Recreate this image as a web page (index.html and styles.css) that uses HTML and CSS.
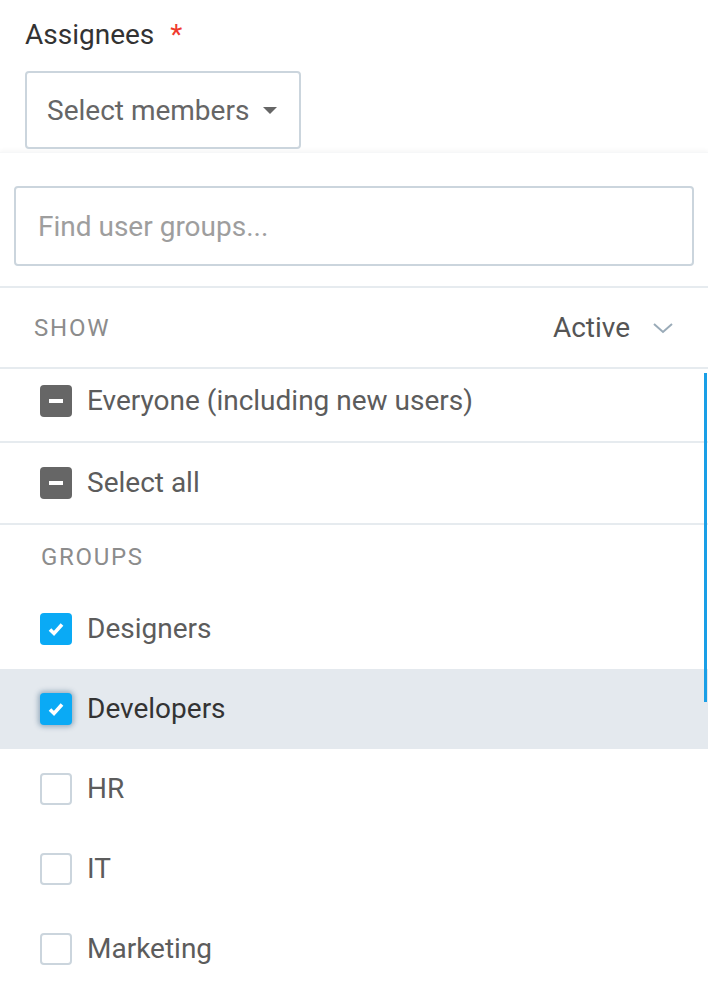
FILE: index.html
```html
<!DOCTYPE html>
<html>
<head>
<meta charset="utf-8">
<link rel="stylesheet" href="styles.css">
</head>
<body>
<div class="field">
  <div class="label">Assignees<span class="req">*</span></div>
  <div class="select">
    <span>Select members</span>
    <span class="caret"></span>
  </div>
</div>
<div class="panel">
  <div class="search-wrap">
    <input class="search" type="text" placeholder="Find user groups...">
  </div>
  <div class="show-row">
    <span class="show-label">SHOW</span>
    <span class="show-value">Active
      <svg class="chev" width="22" height="12" viewBox="0 0 22 12"><path d="M2 2 L11 10 L20 2" fill="none" stroke="#9aabb8" stroke-width="2"/></svg>
    </span>
  </div>
  <div class="list">
    <div class="scrollbar"></div>
    <div class="row row-first">
      <span class="cb cb-ind"><span class="bar"></span></span>
      <span class="txt">Everyone (including new users)</span>
    </div>
    <div class="row row-sep">
      <span class="cb cb-ind"><span class="bar"></span></span>
      <span class="txt">Select all</span>
    </div>
    <div class="group-head">GROUPS</div>
    <div class="row">
      <span class="cb cb-on"><svg width="32" height="32" viewBox="0 0 32 32"><path d="M10 16.5 L14 20.5 L22 11.5" fill="none" stroke="#fff" stroke-width="3.6"/></svg></span>
      <span class="txt">Designers</span>
    </div>
    <div class="row row-hl">
      <span class="cb cb-on cb-focus"><svg width="32" height="32" viewBox="0 0 32 32"><path d="M10 16.5 L14 20.5 L22 11.5" fill="none" stroke="#fff" stroke-width="3.6"/></svg></span>
      <span class="txt">Developers</span>
    </div>
    <div class="row">
      <span class="cb cb-off"></span>
      <span class="txt">HR</span>
    </div>
    <div class="row">
      <span class="cb cb-off"></span>
      <span class="txt">IT</span>
    </div>
    <div class="row">
      <span class="cb cb-off"></span>
      <span class="txt">Marketing</span>
    </div>
  </div>
</div>
</body>
</html>
```
FILE: styles.css
```css
* { box-sizing: border-box; }
html, body {
  margin: 0;
  padding: 0;
  background: #fff;
  font-family: Roboto, "Liberation Sans", sans-serif;
  overflow: hidden;
}
.field {
  padding: 15px 25px 0;
  height: 152px;
}
.label {
  font-size: 28px;
  line-height: 40px;
  color: #333;
  display: flex;
  align-items: flex-start;
}
.req {
  color: #f03a2e;
  margin-left: 16px;
  font-size: 28px;
  line-height: 40px;
}
.select {
  margin-top: 16px;
  display: inline-flex;
  height: 78px;
  border: 2px solid #cbd5dd;
  border-radius: 4px;
  align-items: center;
  padding: 0 22px 0 20px;
  font-size: 28px;
  color: #666;
  white-space: nowrap;
}
.caret {
  margin-left: 14px;
  width: 0;
  height: 0;
  border-left: 7px solid transparent;
  border-right: 7px solid transparent;
  border-top: 7px solid #666;
}
.panel {
  box-shadow: 0 -2px 4px rgba(0,0,0,0.035);
  border-top: 1px solid #f6f7f8;
}
.search-wrap {
  padding: 33px 14px 20px;
}
.search {
  display: block;
  width: 680px;
  height: 80px;
  border: 2px solid #cbd5dd;
  border-radius: 4px;
  padding: 0 22px;
  font-family: Roboto, "Liberation Sans", sans-serif;
  font-size: 28px;
  color: #333;
  outline: none;
}
.search::placeholder { color: #9e9e9e; }
.show-row {
  border-top: 2px solid #e6ebef;
  border-bottom: 2px solid #e6ebef;
  height: 83px;
  display: flex;
  align-items: center;
  justify-content: space-between;
  padding: 0 34px;
}
.show-label {
  font-size: 24px;
  letter-spacing: 1.8px;
  color: #8c8c8c;
}
.show-value {
  font-size: 28px;
  color: #555;
  display: flex;
  align-items: center;
}
.chev { margin-left: 22px; }
.list { position: relative; }
.scrollbar {
  position: absolute;
  right: 1px;
  top: 4px;
  width: 3px;
  height: 329px;
  background: #1a9fe6;
  z-index: 2;
}
.row {
  height: 80px;
  display: flex;
  align-items: center;
  padding-left: 40px;
}
.row-first {
  height: 74px;
  padding-top: 16px;
  padding-bottom: 24px;
  border-bottom: 2px solid #e6ebef;
}
.row-sep {
  height: 82px;
  border-bottom: 2px solid #e6ebef;
}
.row-hl { background: #e4e9ee; }
.row-hl .txt { color: #333; }
.cb {
  width: 32px;
  height: 32px;
  border-radius: 4px;
  flex: none;
  display: flex;
  align-items: center;
  justify-content: center;
}
.cb-ind { background: #666; }
.cb-ind .bar {
  width: 14px;
  height: 4px;
  background: #fff;
}
.cb-on { background: #0aaaf5; }
.cb-focus { box-shadow: 0 0 5px 2px rgba(20, 70, 110, 0.35); }
.cb-off {
  border: 2px solid #cbd5dd;
  background: #fff;
}
.txt {
  margin-left: 15px;
  font-size: 28px;
  color: #5c5c5c;
  line-height: 32px;
}
.group-head {
  height: 64px;
  display: flex;
  align-items: center;
  padding-left: 41px;
  font-size: 24px;
  letter-spacing: 1.7px;
  color: #8c8c8c;
}
```
